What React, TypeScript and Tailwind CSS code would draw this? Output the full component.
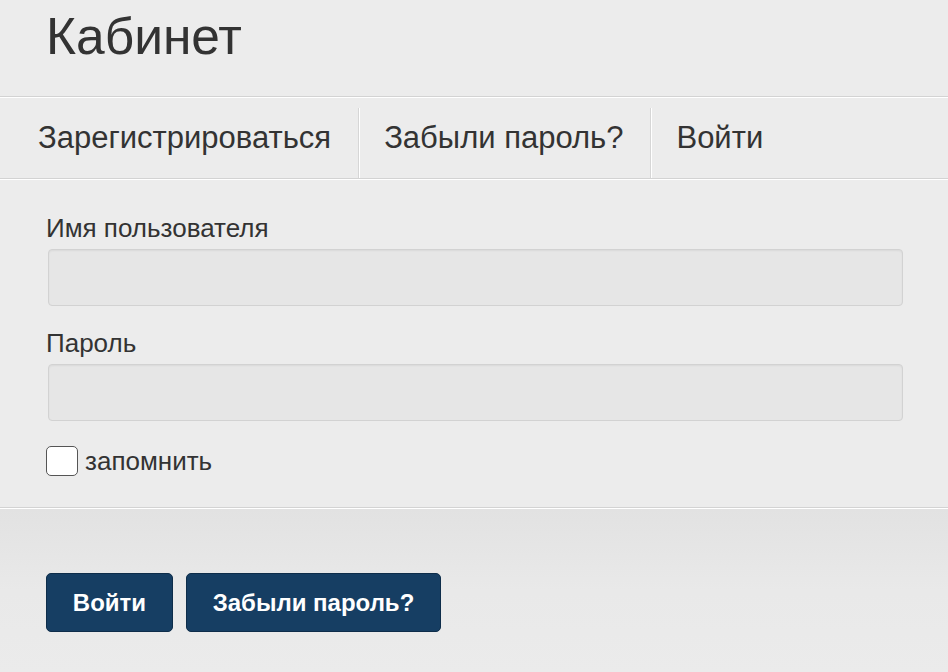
const font = { fontFamily: '"Liberation Sans", Arial, sans-serif' };

const Field = ({ label }: { label: string }) => (
  <div className="flex flex-col">
    <label className="pl-[46px] text-[26px] leading-[30px] text-[#333]">
      {label}
    </label>
    <div className="ml-[48px] mr-[45px] mt-[6px] h-[57px] rounded-[4px] border border-[#d2d2d2] bg-[#e6e6e6] shadow-[inset_0_1px_2px_rgba(0,0,0,0.06)]" />
  </div>
);

const Divider = () => (
  <div className="border-t border-b border-t-[#d3d3d3] border-b-white" />
);

export default function App() {
  const tabs = ["Зарегистрироваться", "Забыли пароль?", "Войти"];

  return (
    <main
      className="flex h-[672px] w-[948px] flex-col overflow-hidden bg-[#ececec] text-[#333]"
      style={font}
    >
      <header className="flex h-[96px] items-start pl-[46px] pt-[6px]">
        <h1 className="text-[51.5px] leading-[60px] font-normal text-[#333]">
          Кабинет
        </h1>
      </header>
      <Divider />

      <nav className="flex h-[80px] items-stretch pl-[12px]">
        {tabs.map((t, i) => (
          <div key={t} className="flex items-stretch">
            <span
              className={`flex items-center pr-[27px] text-[31px] text-[#333] ${
                i === 0 ? "pl-[26px]" : "pl-[24px]"
              }`}
            >
              {t}
            </span>
            {i < tabs.length - 1 && (
              <span className="mt-[10px] w-[2px] border-l border-r border-l-[#d6d6d6] border-r-white" />
            )}
          </div>
        ))}
      </nav>
      <Divider />

      <section className="flex flex-col pt-[33px]">
        <Field label="Имя пользователя" />
        <div className="h-[22px]" />
        <Field label="Пароль" />
        <div className="mt-[25px] flex h-[30px] items-center pl-[46px]">
          <span className="h-[30px] w-[32px] rounded-[5px] border border-[#555] bg-white" />
          <span className="ml-[7px] text-[26px] leading-[30px] text-[#333]">
            запомнить
          </span>
        </div>
      </section>

      <div className="mt-[31px]">
        <Divider />
      </div>

      <footer className="flex flex-1 items-start gap-[13px] bg-gradient-to-b from-[#e2e2e2] via-[#e9e9e9] to-[#ebebeb] pl-[46px] pt-[64px]">
        <button className="h-[59px] w-[127px] rounded-[5px] border border-[#0e2d4a] bg-[#163e63] text-[24px] font-bold text-white">
          Войти
        </button>
        <button className="h-[59px] w-[255px] rounded-[5px] border border-[#0e2d4a] bg-[#163e63] text-[24px] font-bold text-white">
          Забыли пароль?
        </button>
      </footer>
    </main>
  );
}
